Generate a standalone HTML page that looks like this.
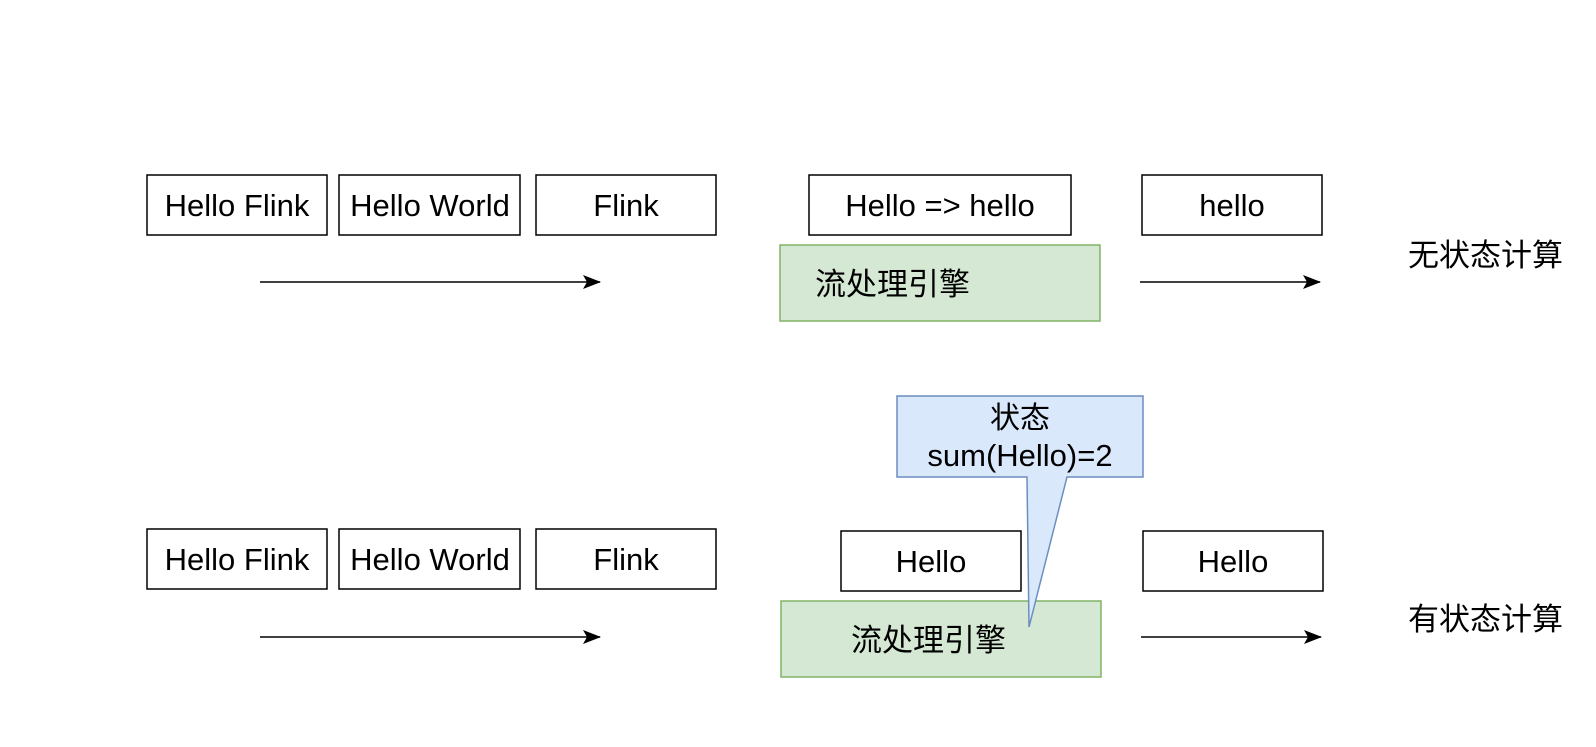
<!DOCTYPE html>
<html><head><meta charset="utf-8"><style>
html,body{margin:0;padding:0;background:#fff;}
svg text{font-family:"Liberation Sans","Noto Sans CJK SC",sans-serif;}
</style></head><body>
<svg width="1596" height="742" viewBox="0 0 1596 742" xmlns="http://www.w3.org/2000/svg">
<defs><marker id="a" markerWidth="18" markerHeight="14" refX="17" refY="7" orient="auto" markerUnits="userSpaceOnUse"><path d="M0,0 L18,7 L0,14 L4,7 Z" fill="#000"/></marker></defs>
<g fill="#fff" stroke="#000" stroke-width="1.5">
<rect x="147" y="175" width="180" height="60"/>
<rect x="339" y="175" width="181" height="60"/>
<rect x="536" y="175" width="180" height="60"/>
<rect x="809" y="175" width="262" height="60"/>
<rect x="1142" y="175" width="180" height="60"/>
<rect x="147" y="529" width="180" height="60"/>
<rect x="339" y="529" width="181" height="60"/>
<rect x="536" y="529" width="180" height="60"/>
<rect x="841" y="531" width="180" height="60"/>
<rect x="1143" y="531" width="180" height="60"/>
</g>
<g fill="#d5e8d4" stroke="#82b366" stroke-width="1.5">
<rect x="780" y="245" width="320" height="76"/>
<rect x="781" y="601" width="320" height="76"/>
</g>
<path d="M897,396 H1143 V477 H1067 L1029,627 L1027,477 H897 Z" fill="#dae8fc" stroke="#6c8ebf" stroke-width="1.5"/>
<g stroke="#000" stroke-width="1.5" fill="none">
<line x1="260" y1="282" x2="600" y2="282" marker-end="url(#a)"/>
<line x1="1140" y1="282" x2="1320" y2="282" marker-end="url(#a)"/>
<line x1="260" y1="637" x2="600" y2="637" marker-end="url(#a)"/>
<line x1="1141" y1="637" x2="1321" y2="637" marker-end="url(#a)"/>
</g>
<g font-size="31" text-anchor="middle" fill="#000">
<text x="237" y="216">Hello Flink</text>
<text x="430" y="216">Hello World</text>
<text x="626" y="216">Flink</text>
<text x="940" y="216">Hello =&gt; hello</text>
<text x="1232" y="216">hello</text>
<text x="237" y="570">Hello Flink</text>
<text x="430" y="570">Hello World</text>
<text x="626" y="570">Flink</text>
<text x="931" y="572">Hello</text>
<text x="1233" y="572">Hello</text>
<text x="1020" y="428" font-size="30">状态</text>
<text x="1020" y="466">sum(Hello)=2</text>
</g>
<g font-size="31" fill="#000">
<text x="815" y="295">流处理引擎</text>
<text x="851" y="651">流处理引擎</text>
<text x="1408" y="266">无状态计算</text>
<text x="1408" y="630">有状态计算</text>
</g>
</svg>
</body></html>
